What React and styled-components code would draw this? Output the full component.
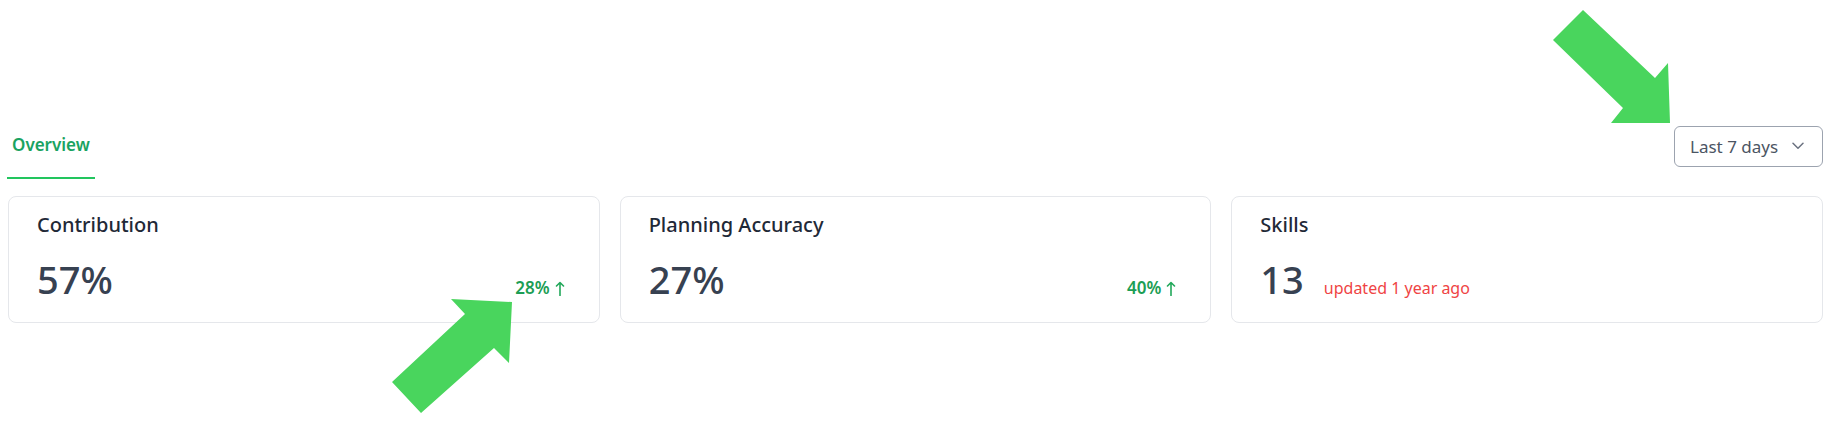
import React from "react";
import styled, { createGlobalStyle } from "styled-components";

const GlobalStyle = createGlobalStyle`
  * { box-sizing: border-box; }
  html, body { margin: 0; padding: 0; background: #ffffff; }
  body { font-family: "Noto Sans", "Open Sans", Arial, sans-serif; overflow: hidden; }
`;

const Page = styled.div`
  position: relative;
  min-height: 424px;
  padding: 113px 4px 0 8px;
  overflow: hidden;
`;

const Header = styled.div`
  display: flex;
  align-items: center;
  justify-content: space-between;
  margin-left: -1px;
`;

const Tab = styled.div`
  padding: 20px 5px;
  font-size: 17px;
  line-height: 24px;
  font-weight: 600;
  color: ${(p) => (p.$active ? "#1aa361" : "#6b7280")};
  border-bottom: 2px solid ${(p) => (p.$active ? "#22c55e" : "transparent")};
`;

const Dropdown = styled.button`
  display: flex;
  align-items: center;
  justify-content: space-between;
  height: 41px;
  width: 149px;
  padding: 0 18px 0 15px;
  background: #ffffff;
  border: 1px solid #9ca3af;
  border-radius: 6px;
  font-family: inherit;
  font-size: 17px;
  color: #4b5563;
  cursor: pointer;
  white-space: nowrap;

  svg { flex-shrink: 0; }
`;

const Cards = styled.div`
  display: grid;
  grid-template-columns: repeat(3, 1fr);
  gap: 20px;
  margin-top: 17px;
`;

const Card = styled.div`
  background: #ffffff;
  border: 1px solid #e5e7eb;
  border-radius: 8px;
  padding: 14px 28px 23px;
  display: flex;
  flex-direction: column;
  gap: 20px;
`;

const CardTitle = styled.div`
  font-size: 20px;
  line-height: 28px;
  font-weight: 500;
  color: #1f2937;
`;

const ValueRow = styled.div`
  display: flex;
  align-items: baseline;
  justify-content: ${(p) => (p.$spread ? "space-between" : "flex-start")};
  gap: 20px;
`;

const Value = styled.div`
  font-size: 38px;
  line-height: 40px;
  font-weight: 500;
  color: #374151;
`;

const Trend = styled.div`
  display: flex;
  align-items: baseline;
  gap: 5px;
  margin-right: 6px;
  font-size: 17px;
  font-weight: 600;
  color: #1c9e55;
`;

const Note = styled.span`
  font-size: 16px;
  color: #ef4444;
`;

const Overlay = styled.svg`
  position: absolute;
  left: 0;
  top: 0;
  width: 1827px;
  height: 424px;
  pointer-events: none;
`;

const ChevronDown = () => (
  <svg width="12" height="8" viewBox="0 0 12 8" fill="none">
    <path d="M1 1.2 L6 6.2 L11 1.2" stroke="#6b7280" strokeWidth="1.5" strokeLinecap="round" strokeLinejoin="round" />
  </svg>
);

const UpArrow = () => (
  <svg width="10" height="15" viewBox="0 0 10 15" fill="none" style={{ alignSelf: "center", transform: "translateY(1px)" }}>
    <path d="M5 14.5 V1.5 M1.5 5 L5 1.5 L8.5 5" stroke="#22a85a" strokeWidth="1.6" strokeLinecap="round" strokeLinejoin="round" />
  </svg>
);

const cards = [
  { title: "Contribution", value: "57%", trend: "28%" },
  { title: "Planning Accuracy", value: "27%", trend: "40%" },
  { title: "Skills", value: "13", note: "updated 1 year ago" },
];

export default function App() {
  return (
    <>
      <GlobalStyle />
      <Page>
        <Header>
          <Tab $active>Overview</Tab>
          <Dropdown>
            Last 7 days
            <ChevronDown />
          </Dropdown>
        </Header>
        <Cards>
          {cards.map((c) => (
            <Card key={c.title}>
              <CardTitle>{c.title}</CardTitle>
              <ValueRow $spread={!!c.trend}>
                <Value>{c.value}</Value>
                {c.trend && (
                  <Trend>
                    {c.trend}
                    <UpArrow />
                  </Trend>
                )}
                {c.note && <Note>{c.note}</Note>}
              </ValueRow>
            </Card>
          ))}
        </Cards>
        <Overlay viewBox="0 0 1827 424">
          <polygon
            fill="#49d55d"
            points="1553,40 1583,10 1655,78 1668,63 1670,123 1611,123 1623,108"
          />
          <polygon
            fill="#49d55d"
            points="392,382 421,413 494,348 509,363 512,302 451,299 465,314"
          />
        </Overlay>
      </Page>
    </>
  );
}
